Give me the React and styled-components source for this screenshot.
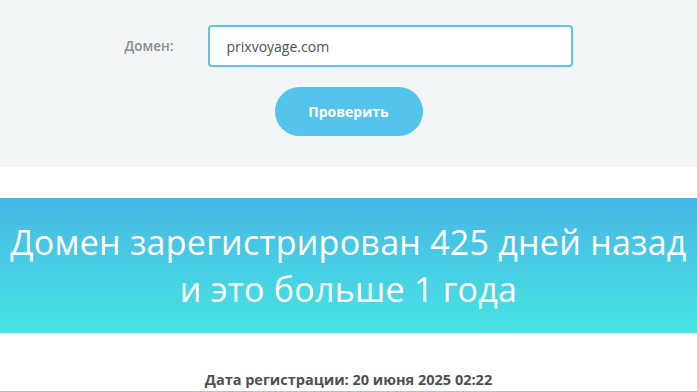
import React from 'react'
import styled, { createGlobalStyle } from 'styled-components'

const GlobalStyle = createGlobalStyle`
  body {
    margin: 0;
    background: #ffffff;
    font-family: "Open Sans", "Liberation Sans", sans-serif;
  }
`

const CheckSection = styled.section`
  background: #f2f6f7;
  height: 167px;
  box-sizing: border-box;
  padding-top: 25px;
  display: flex;
  flex-direction: column;
  align-items: center;
`

const FieldRow = styled.div`
  display: flex;
  align-items: center;
  gap: 31px;
`

const Label = styled.label`
  font-size: 13.5px;
  font-weight: 600;
  color: #8b8e90;
  width: 52px;
`

const Input = styled.input`
  width: 365px;
  height: 42px;
  box-sizing: border-box;
  border: 2px solid #5bc5ec;
  border-radius: 4px;
  background: #ffffff;
  padding: 0 17px;
  font-family: "Open Sans", sans-serif;
  font-size: 14px;
  color: #4e5256;
  outline: none;
`

const CheckButton = styled.button`
  margin-top: 20px;
  width: 148px;
  height: 49px;
  border: none;
  border-radius: 25px;
  background: #55c4ec;
  color: #ffffff;
  font-family: "Open Sans", sans-serif;
  font-size: 14px;
  font-weight: 700;
  cursor: pointer;
`

const Banner = styled.section`
  margin-top: 31px;
  height: 135px;
  background: linear-gradient(180deg, #47b7e5 0%, #48e3e3 100%);
  display: flex;
  align-items: center;
  justify-content: center;
  text-align: center;
`

const Headline = styled.h1`
  margin: 0;
  font-family: "Open Sans", sans-serif;
  font-size: 34px;
  font-weight: 400;
  letter-spacing: 0.25px;
  line-height: 47px;
  color: #ffffff;
`

const Info = styled.div`
  padding-top: 37px;
  text-align: center;
  border-bottom: 1px solid #bdbdbd;
  height: 21px;
`

const InfoText = styled.p`
  margin: 0;
  font-size: 14.5px;
  font-weight: 700;
  color: #4d5055;
  line-height: 19px;
`

export default function App() {
  return (
    <>
      <GlobalStyle />
      <CheckSection>
        <FieldRow>
          <Label htmlFor="domain">Домен:</Label>
          <Input id="domain" defaultValue="prixvoyage.com" />
        </FieldRow>
        <CheckButton>Проверить</CheckButton>
      </CheckSection>
      <Banner>
        <Headline>
          Домен зарегистрирован 425 дней назад
          <br />
          и это больше 1 года
        </Headline>
      </Banner>
      <Info>
        <InfoText>Дата регистрации: 20 июня 2025 02:22</InfoText>
      </Info>
    </>
  )
}
